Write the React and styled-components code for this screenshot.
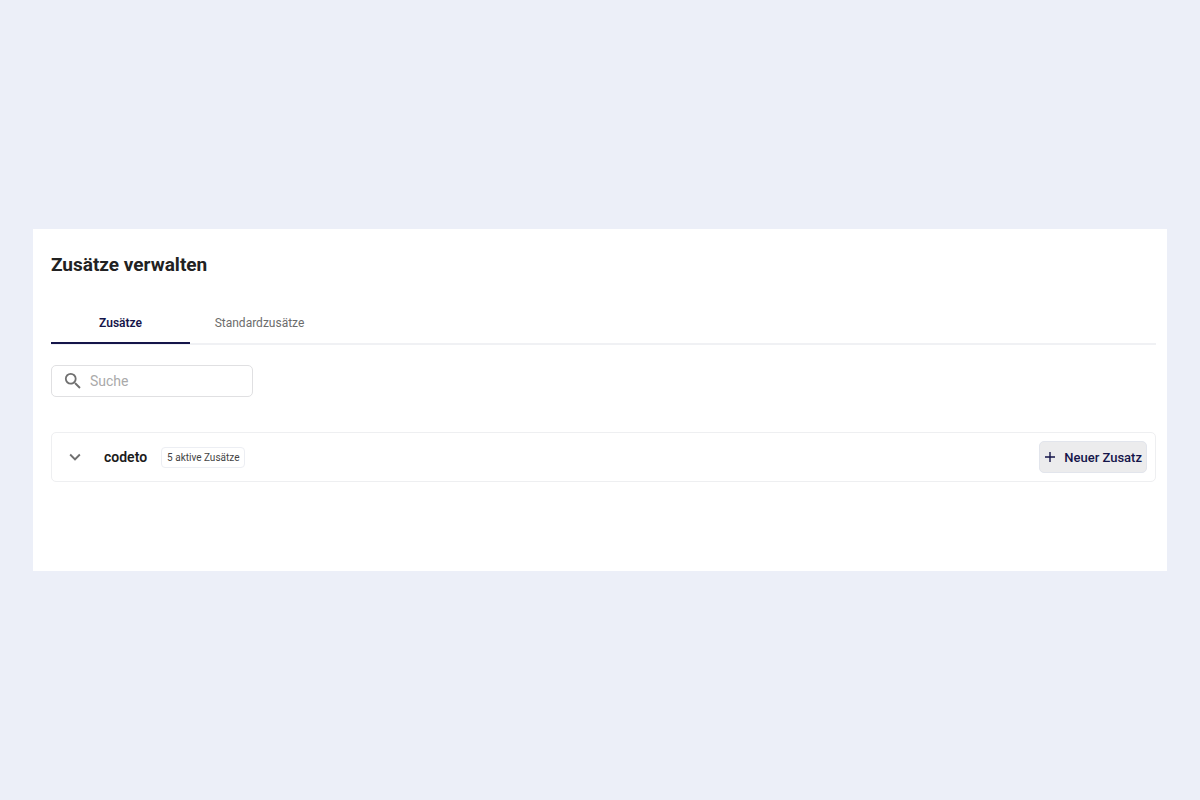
import { useState } from "react";
import styled, { createGlobalStyle } from "styled-components";

const GlobalStyle = createGlobalStyle`
  * {
    box-sizing: border-box;
  }

  body {
    margin: 0;
    background-color: #eceff8;
    font-family: Roboto, "Liberation Sans", sans-serif;
  }

  button,
  input {
    font-family: inherit;
  }
`;

const Container = styled.div`
  min-height: 100vh;
  padding: 33px;
  display: flex;
  align-items: center;
`;

const Wrapper = styled.main`
  flex: 1;
  min-width: 0;
  padding: 24px 11px 89px 18px;
  background-color: white;
`;

const Title = styled.h1`
  margin: 0;
  font-size: 19px;
  line-height: 24px;
  font-weight: 700;
  color: #222;
`;

const Tabs = styled.div`
  display: flex;
  align-items: flex-start;
  height: 44px;
  margin-top: 24px;
  box-shadow: inset 0 -2px 0 #f0f1f4;
`;

const Tab = styled.button`
  width: 139px;
  height: 43px;
  padding: 3px 0 0;
  border: none;
  border-bottom: 2px solid
    ${(props) => (props.$active ? "#15154a" : "transparent")};
  background: none;
  font-size: 12px;
  font-weight: ${(props) => (props.$active ? 600 : 400)};
  color: ${(props) => (props.$active ? "#15154a" : "#6c6c6c")};
  cursor: pointer;
`;

const Search = styled.label`
  width: 202px;
  height: 32px;
  margin-top: 20px;
  padding: 0 12px;
  display: flex;
  align-items: center;
  gap: 8px;
  border: 1px solid #e0e0e2;
  border-radius: 5px;
  color: #707070;
`;

const SearchInput = styled.input`
  flex: 1;
  min-width: 0;
  padding: 0;
  border: none;
  outline: none;
  background: none;
  font-size: 14px;
  color: #222;

  &::placeholder {
    color: #aaa;
    opacity: 1;
  }
`;

const Group = styled.section`
  height: 50px;
  margin-top: 35px;
  padding: 0 8px 0 12px;
  display: flex;
  align-items: center;
  border: 1px solid #eeeff1;
  border-radius: 5px;
`;

const Toggle = styled.button`
  width: 22px;
  height: 22px;
  padding: 0;
  border: none;
  background: none;
  color: #707070;
  cursor: pointer;
`;

const GroupName = styled.h2`
  margin: 0 14px 0 18px;
  font-size: 14px;
  font-weight: 600;
  color: #1c1c1c;
`;

const Badge = styled.span`
  height: 21px;
  padding: 0 5px;
  border: 1px solid #eceef3;
  border-radius: 4px;
  font-size: 10px;
  line-height: 19px;
  color: #444;
`;

const AddButton = styled.button`
  height: 32px;
  margin-left: auto;
  padding: 0 4px;
  display: flex;
  align-items: center;
  gap: 8px;
  border: 1px solid #e2e5ec;
  border-radius: 5px;
  background-color: #ececed;
  font-size: 13px;
  font-weight: 500;
  color: #15154a;
  cursor: pointer;
`;

const Icon = styled.svg`
  display: block;
  flex: none;
  fill: currentColor;
`;

const App = () => {
  const [tab, setTab] = useState("addons");
  const [search, setSearch] = useState("");

  return (
    <>
      <GlobalStyle />
      <Container>
        <Wrapper>
          <Title>Zusätze verwalten</Title>
          <Tabs role="tablist">
            <Tab
              role="tab"
              aria-selected={tab === "addons"}
              $active={tab === "addons"}
              onClick={() => setTab("addons")}
            >
              Zusätze
            </Tab>
            <Tab
              role="tab"
              aria-selected={tab === "standard"}
              $active={tab === "standard"}
              onClick={() => setTab("standard")}
            >
              Standardzusätze
            </Tab>
          </Tabs>
          <Search>
            <Icon width="18" height="18" viewBox="2 2 20 20">
              <path d="M15.5 14h-.79l-.28-.27A6.47 6.47 0 0 0 16 9.5 6.5 6.5 0 1 0 9.5 16c1.61 0 3.09-.59 4.23-1.57l.27.28v.79l5 4.99L20.49 19l-4.99-5zm-6 0C7.01 14 5 11.99 5 9.5S7.01 5 9.5 5 14 7.01 14 9.5 11.99 14 9.5 14z" />
            </Icon>
            <SearchInput
              aria-label="Suche"
              placeholder="Suche"
              value={search}
              onChange={(e) => setSearch(e.target.value)}
            />
          </Search>
          <Group>
            <Toggle aria-label="codeto">
              <Icon width="22" height="22" viewBox="0 0 24 24">
                <path d="M7.41 8.59 12 13.17l4.59-4.58L18 10l-6 6-6-6 1.41-1.41z" />
              </Icon>
            </Toggle>
            <GroupName>codeto</GroupName>
            <Badge>5 aktive Zusätze</Badge>
            <AddButton>
              <Icon width="12" height="12" viewBox="0 0 12 12">
                <path d="M5.3 1h1.4v4.3H11v1.4H6.7V11H5.3V6.7H1V5.3h4.3z" />
              </Icon>
              Neuer Zusatz
            </AddButton>
          </Group>
        </Wrapper>
      </Container>
    </>
  );
};

export default App;
